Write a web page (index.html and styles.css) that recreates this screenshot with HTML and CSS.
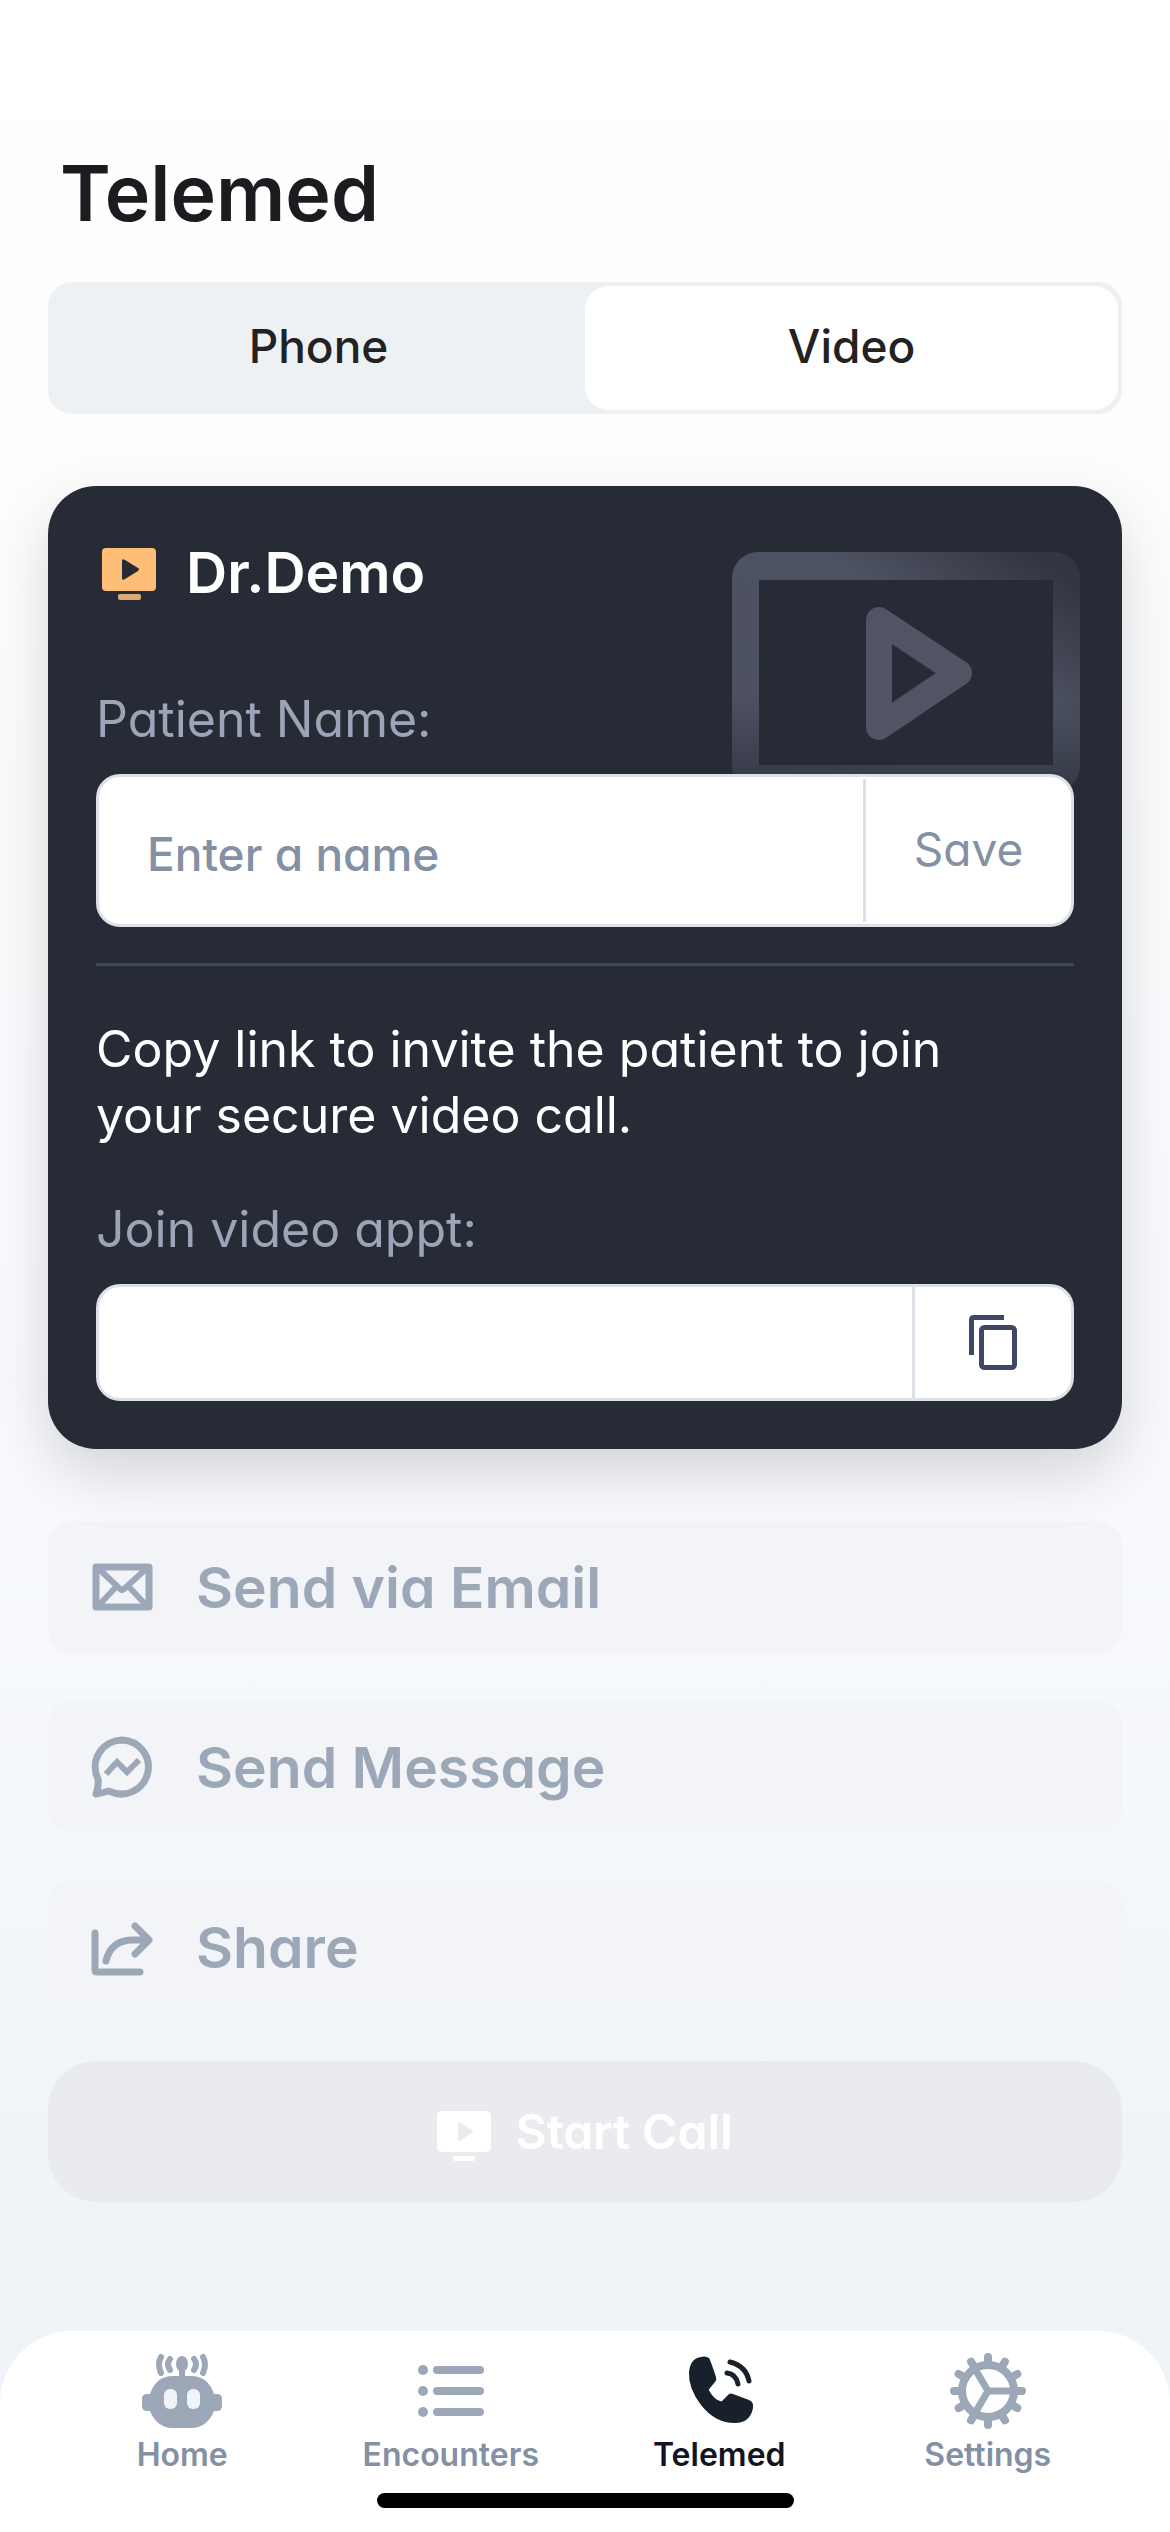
FILE: index.html
```html
<!DOCTYPE html>
<html lang="en">
<head>
<meta charset="utf-8">
<meta name="viewport" content="width=device-width, initial-scale=1">
<title>Telemed</title>
<link rel="stylesheet" href="styles.css">
</head>
<body>
<div class="app">
  <header class="header">
    <h1 class="title">Telemed</h1>
  </header>

  <main class="content">
    <div class="segmented" role="tablist">
      <button class="segment" type="button" role="tab" aria-selected="false">Phone</button>
      <button class="segment segment-active" type="button" role="tab" aria-selected="true">Video</button>
    </div>

    <section class="card">
      <svg class="card-art" viewBox="0 0 348 290" aria-hidden="true">
        <defs>
          <linearGradient id="frame" gradientUnits="userSpaceOnUse" x1="100" y1="260" x2="300" y2="-20">
            <stop offset="0" stop-color="#4c5061"/>
            <stop offset="0.6" stop-color="#4e5363"/>
            <stop offset="0.95" stop-color="#333641"/>
          </linearGradient>
          <linearGradient id="fade" x1="0" y1="0" x2="0" y2="1">
            <stop offset="0.6" stop-color="#272b36" stop-opacity="0"/>
            <stop offset="0.9" stop-color="#272b36" stop-opacity="0.5"/>
            <stop offset="1" stop-color="#272b36" stop-opacity="0.7"/>
          </linearGradient>
        </defs>
        <path fill="url(#frame)" fill-rule="evenodd" d="M26 0H322A26 26 0 0 1 348 26V214A26 26 0 0 1 322 240H26A26 26 0 0 1 0 214V26A26 26 0 0 1 26 0ZM27 28V213H321V28Z"/>
        <rect width="348" height="242" fill="url(#fade)"/>
        <path fill="none" stroke="#505464" stroke-width="26" stroke-linejoin="round" d="M147 68V175L227 121Z"/>
      </svg>

      <div class="doctor">
        <svg class="doctor-icon" viewBox="0 0 54 52" aria-hidden="true">
          <path fill="#ffbe78" fill-rule="evenodd" d="M4 0H50A4 4 0 0 1 54 4V39A4 4 0 0 1 50 43H4A4 4 0 0 1 0 39V4A4 4 0 0 1 4 0ZM20 13V30Q20 33 23 31L36 23Q38 21 36 20L23 12Q20 10 20 13Z"/>
          <rect x="16" y="46" width="23" height="6" rx="2" fill="#dfa974"/>
        </svg>
        <h2 class="doctor-name">Dr.Demo</h2>
      </div>

      <label class="label" for="patient">Patient Name:</label>
      <div class="field field-name">
        <input class="field-input" id="patient" type="text" placeholder="Enter a name">
        <button class="field-save" type="button">Save</button>
      </div>

      <hr class="rule">

      <p class="invite">Copy link to invite the patient to join your secure video call.</p>

      <label class="label" for="link">Join video appt:</label>
      <div class="field field-link">
        <input class="field-input" id="link" type="text" readonly>
        <button class="field-copy" type="button" aria-label="Copy link">
          <svg class="copy-icon" viewBox="0 0 48 56" aria-hidden="true">
            <path fill="none" stroke="#3c4866" stroke-width="5" d="M2.5 40V5Q2.5 2.500 5 2.500H35"/>
            <rect x="12.500" y="12.500" width="33" height="40" rx="3" fill="none" stroke="#3c4866" stroke-width="5"/>
          </svg>
        </button>
      </div>
    </section>

    <div class="actions">
      <button class="action" type="button" disabled>
        <svg class="action-icon" viewBox="0 0 62 62" aria-hidden="true">
          <g fill="none" stroke="#9ca7b8" stroke-linejoin="round" stroke-linecap="round">
            <rect x="5" y="11" width="53" height="40" stroke-width="7"/>
            <path stroke-width="6" d="M7 12L29 33Q31 35 33 33L56 12M8 49L24 32M55 49L39 32"/>
          </g>
        </svg>
        <span>Send via Email</span>
      </button>
      <button class="action" type="button" disabled>
        <svg class="action-icon" viewBox="0 0 62 62" aria-hidden="true">
          <g fill="none" stroke="#9ca7b8" stroke-width="7" stroke-linejoin="round" stroke-linecap="round">
            <path d="M31 4A27 27 0 1 1 18 55Q11 57 5 58Q8 50 7 43A27 27 0 0 1 31 4Z"/>
            <path stroke-width="6" stroke-linecap="butt" stroke-linejoin="miter" d="M15 38L26 26L36 36L48 24"/>
          </g>
        </svg>
        <span>Send Message</span>
      </button>
      <button class="action" type="button" disabled>
        <svg class="action-icon" viewBox="0 0 62 62" aria-hidden="true">
          <g fill="none" stroke="#9ca7b8" stroke-width="7" stroke-linejoin="round" stroke-linecap="round">
            <path d="M4 17V54Q4 56 6 56H49"/>
            <path d="M15 45Q20 24 42 24H57M44 10L58 24L44 38"/>
          </g>
        </svg>
        <span>Share</span>
      </button>
      <button class="start" type="button" disabled>
        <svg class="start-icon" viewBox="0 0 54 50" aria-hidden="true">
          <path fill="#fff" fill-rule="evenodd" d="M5 0H49A5 5 0 0 1 54 5V36A5 5 0 0 1 49 41H5A5 5 0 0 1 0 36V5A5 5 0 0 1 5 0ZM21 13V28Q21 31 24 29L35 22Q37 21 35 19L24 12Q21 10 21 13Z"/>
          <rect x="16" y="45" width="22" height="5" rx="2" fill="#fff"/>
        </svg>
        <span>Start Call</span>
      </button>
    </div>
  </main>

  <footer class="tabbar">
    <nav class="tabs">
      <a class="tab" href="#home">
        <svg class="tab-icon" viewBox="0 0 80 80" aria-hidden="true">
          <g fill="#9ca7b8">
            <path d="M31 25H49Q66 25 72 43H75Q80 43 80 48V55Q80 60 75 60H72Q65 77 49 77H31Q15 77 8 60H5Q0 60 0 55V48Q0 43 5 43H8Q14 25 31 25Z"/>
            <rect x="37" y="14" width="6" height="14"/>
            <ellipse cx="40" cy="13" rx="6" ry="8"/>
          </g>
          <g fill="none" stroke="#9ca7b8" stroke-width="6" stroke-linecap="round">
            <path d="M19 6Q15 13 19 22M28 8Q24 13 28 19M61 6Q65 13 61 22M52 8Q56 13 52 19"/>
          </g>
          <rect x="22" y="38" width="13" height="20" rx="6" fill="#f0f3f9"/>
          <rect x="45" y="38" width="13" height="20" rx="6" fill="#f0f3f9"/>
        </svg>
        <span>Home</span>
      </a>
      <a class="tab" href="#encounters">
        <svg class="tab-icon" viewBox="0 0 80 80" aria-hidden="true">
          <g fill="#9ca7b8">
            <circle cx="12" cy="19" r="5"/><circle cx="12" cy="40" r="5"/><circle cx="12" cy="61" r="5"/>
            <rect x="22" y="15" width="51" height="8" rx="4"/>
            <rect x="22" y="36" width="51" height="8" rx="4"/>
            <rect x="22" y="57" width="51" height="8" rx="4"/>
          </g>
        </svg>
        <span>Encounters</span>
      </a>
      <a class="tab tab-active" href="#telemed" aria-current="page">
        <svg class="tab-icon" viewBox="0 0 80 80" aria-hidden="true">
          <path fill="#18212b" d="M18 7Q26 4 30 7Q31 8 37 26Q38 29 36 31L31 37Q29 39 31 41Q35 48 41 50Q43 51 44 49L50 43Q52 42 54 43L70 49Q75 51 74 57Q71 72 56 72Q36 72 22 54Q9 37 10 21Q11 10 18 7Z"/>
          <g fill="none" stroke="#18212b" stroke-width="5" stroke-linecap="round">
            <path d="M51 11Q67 15 70 30M48 22Q57 23 59 33"/>
          </g>
        </svg>
        <span>Telemed</span>
      </a>
      <a class="tab" href="#settings">
        <svg class="tab-icon" viewBox="0 0 80 80" aria-hidden="true">
          <g fill="none" stroke="#9ca7b8" stroke-width="8" stroke-linecap="round">
            <circle cx="40" cy="40" r="26"/>
            <path stroke-width="7" d="M40 40H64M40 40L27 18M40 40L27 62"/>
            <path d="M66 40H74M62.500 53L69.400 57M53 62.500L57 69.400M40 66V74M27 62.500L23 69.400M17.500 53L10.600 57M14 40H6M17.500 27L10.600 23M27 17.500L23 10.600M40 14V6M53 17.500L57 10.600M62.500 27L69.400 23"/>
          </g>
        </svg>
        <span>Settings</span>
      </a>
    </nav>
    <div class="home-indicator"></div>
  </footer>
</div>
</body>
</html>
```
FILE: styles.css
```css
* {
  box-sizing: border-box;
}

body {
  margin: 0;
  background: #fff;
  color: #1e1b20;
  font-family: Inter, "Open Sans", sans-serif;
  font-feature-settings: "cv11";
}

button,
input {
  margin: 0;
  padding: 0;
  border: 0;
  background: none;
  color: inherit;
  font: inherit;
  font-feature-settings: inherit;
}

svg {
  display: block;
  flex: none;
}

.app {
  display: flex;
  flex-direction: column;
  min-height: 100vh;
  background: linear-gradient(#fff 0, #fdfdfd 16%, #f7f9fd 62%, #f0f4f9 86%, #f0f4f9);
}

.header {
  padding: 148px 60px 44px;
}

.title {
  margin: 0;
  font-size: 77px;
  font-weight: 600;
  line-height: 90px;
}

.content {
  display: flex;
  flex-direction: column;
  gap: 72px;
  padding: 0 48px 48px;
}

.segmented {
  display: grid;
  grid-template-columns: 1fr 1fr;
  height: 132px;
  padding: 4px;
  border-radius: 24px;
  background: #edf1f4;
}

.segment {
  padding-bottom: 4px;
  border-radius: 24px;
  color: #222;
  font-size: 46px;
  font-weight: 500;
}

.segment-active {
  background: #fff;
}

.card {
  position: relative;
  padding: 48px;
  border-radius: 48px;
  background: #272b36;
  box-shadow: 0 24px 60px rgba(0, 0, 0, 0.15);
}

.card-art {
  position: absolute;
  top: 66px;
  right: 42px;
  width: 348px;
}

.doctor {
  display: flex;
  align-items: center;
  gap: 30px;
  height: 76px;
  margin-bottom: 76px;
  padding-left: 6px;
}

.doctor-icon {
  width: 54px;
  margin-top: 4px;
}

.doctor-name {
  margin: 0;
  color: #fff;
  font-size: 57px;
  font-weight: 600;
}

.label {
  display: block;
  margin-bottom: 22px;
  color: #9ca5b8;
  font-size: 50px;
  line-height: 66px;
}

.field {
  position: relative;
  display: flex;
  border: 3px solid #dde1e7;
  border-radius: 24px;
  background: #fff;
  overflow: hidden;
}

.field-name {
  height: 153px;
}

.field-link {
  height: 117px;
}

.field-input {
  flex: 1;
  min-width: 0;
  padding: 6px 48px 0;
  font-size: 46px;
  font-weight: 500;
  outline: 0;
}

.field-input::placeholder {
  color: #8490a4;
  opacity: 1;
}

.field-save {
  width: 208px;
  margin: 2px 0;
  padding-bottom: 4px;
  border-left: 3px solid #dde1e7;
  color: #8490a4;
  font-size: 46px;
}

.field-copy {
  display: grid;
  place-items: center;
  width: 159px;
  border-left: 3px solid #dde1e7;
}

.copy-icon {
  width: 48px;
}

.rule {
  height: 3px;
  margin: 36px 0 50px;
  border: 0;
  background: #3c4764;
}

.invite {
  margin: 0 0 48px;
  padding-right: 48px;
  color: #fff;
  font-size: 50px;
  line-height: 66px;
}

.actions {
  display: flex;
  flex-direction: column;
  gap: 48px;
}

.action {
  display: flex;
  align-items: center;
  gap: 43px;
  height: 132px;
  padding: 0 43px;
  border-radius: 24px;
  background: #f3f4f8;
  color: #9ca7b8;
  font-size: 57px;
  font-weight: 600;
}

.action-icon {
  width: 62px;
}

.start {
  display: flex;
  align-items: center;
  justify-content: center;
  gap: 24px;
  height: 141px;
  border-radius: 48px;
  background: #eaebef;
  color: #fff;
  font-size: 48px;
  font-weight: 600;
}

.start-icon {
  width: 54px;
  margin-top: 8px;
}

.tabbar {
  margin-top: auto;
  padding: 20px 48px 24px;
  border-radius: 72px 72px 0 0;
  background: #fff;
}

.tabs {
  display: grid;
  grid-template-columns: repeat(4, 1fr);
}

.tab {
  display: flex;
  flex-direction: column;
  align-items: center;
  gap: 6px;
  color: #8490a4;
  font-size: 32px;
  font-weight: 600;
  line-height: 36px;
  text-decoration: none;
}

.tab-active {
  color: #14141f;
}

.tab-icon {
  width: 80px;
}

.home-indicator {
  width: 417px;
  height: 15px;
  margin: 20px auto 0;
  border-radius: 8px;
  background: #000;
}
```
